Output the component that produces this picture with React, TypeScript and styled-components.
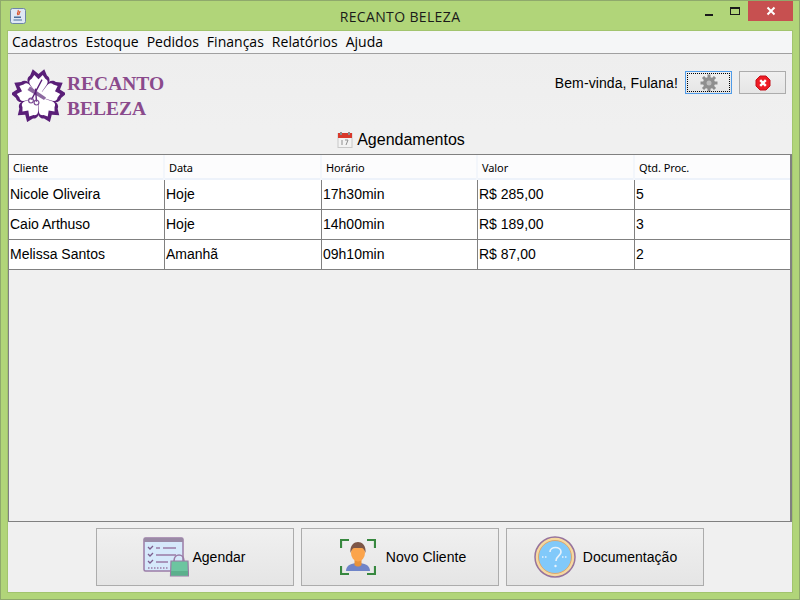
import React from "react";
import styled, { createGlobalStyle } from "styled-components";

const Global = createGlobalStyle`
  html, body { margin: 0; padding: 0; }
  body { font-family: "Liberation Sans", Arial, sans-serif; }
  * { box-sizing: border-box; }
`;

const Frame = styled.div`
  width: 800px; height: 600px; background: #b1d579; border: 1px solid #8fa96c;
  display: flex; flex-direction: column; overflow: hidden;
`;
const TitleBar = styled.div`
  height: 30px; display: flex; align-items: flex-start; position: relative; flex: none;
`;
const AppIcon = styled.div`
  width: 16px; height: 16px; margin: 7px 0 0 9px; flex: none;
`;
const TitleText = styled.div`
  position: absolute; left: 0; right: 0; top: 6px; text-align: center;
  font: 14px "Open Sans", sans-serif; line-height: 19px; color: #1a1a1a; letter-spacing: 0.36px;
`;
const WinControls = styled.div`
  margin-left: auto; margin-right: 6px; display: flex; align-items: flex-start;
`;
const WinBtn = styled.div<{ $w: number }>`
  width: ${p => p.$w}px; height: 20px; display: flex; align-items: center; justify-content: center;
`;
const CloseBtn = styled(WinBtn)`background: #c75050;`;
const Content = styled.div`
  flex: 1; margin: 0 7px 7px; background: #f0f0f0; display: flex; flex-direction: column;
  box-shadow: 0 0 0 1px #a2c46e; min-height: 0;
`;
const MenuBar = styled.div`
  height: 23px; flex: none; background: #f5f6f7; border-bottom: 1px solid #a0a0a0;
  display: flex; align-items: center; padding: 0 0 0 4px; gap: 8px;
`;
const MenuItem = styled.div`
  font: 14px "Open Sans", sans-serif; color: #000; line-height: 22px; letter-spacing: 0.02px;
`;
const Header = styled.div`
  height: 75px; flex: none; display: flex; align-items: flex-start; padding-left: 4px;
  background: linear-gradient(#eeeeee, #f0f0f0);
`;
const Logo = styled.div`display: flex; align-items: flex-start; margin-top: 15px; gap: 2px;`;
const LogoText = styled.div`
  font: bold 19.5px/25px "Liberation Serif", serif; color: #8a4a8c; margin-top: 2px;
`;
const UserArea = styled.div`
  margin-left: auto; margin-right: 6px; margin-top: 17px; display: flex; align-items: center;
`;
const Welcome = styled.div`font-size: 14px; color: #000; margin-right: 7px; letter-spacing: 0.1px;`;
const ToolBtn = styled.button<{ $focus?: boolean }>`
  width: 47px; height: 23px; padding: 0; margin: 0 0 0 ${p => p.$focus ? 0 : 7}px;
  display: flex; align-items: center; justify-content: center;
  background: linear-gradient(#f0f0f0, #e5e5e5);
  border: 1px solid ${p => p.$focus ? "#4f9be8" : "#acacac"};
  outline: ${p => p.$focus ? "1px dotted #000" : "none"}; outline-offset: -3px;
`;
const SectionTitle = styled.div`
  height: 25px; flex: none; display: flex; align-items: center; justify-content: center; gap: 4px;
  font-size: 16px; color: #000; padding-bottom: 3px; padding-left: 2px;
`;
const TableBox = styled.div`
  flex: 1; border: 1px solid #808080; border-right-width: 2px; min-height: 0;
  background: #f0f0f0; display: flex; flex-direction: column;
`;
const columns = "156px 157px 156px 157px 1fr";
const HeadRow = styled.div`
  display: grid; grid-template-columns: ${columns}; height: 25px; flex: none;
  background: #fcfcfd; border-bottom: 2px solid #edf2fa;
`;
const HeadCell = styled.div`
  font: 11px/25px "Noto Sans", sans-serif; color: #000; padding-left: 4px;
  border-right: 2px solid #f3f6fb; letter-spacing: -0.1px;
  &:last-child { border-right: none; }
`;
const Row = styled.div`
  display: grid; grid-template-columns: ${columns}; height: 30px; flex: none;
  background: #fff; border-bottom: 1px solid #808080;
`;
const Cell = styled.div`
  font-size: 14px; line-height: 29px; color: #000; padding-left: 1px;
  border-right: 1px solid #808080;
  &:last-child { border-right: none; }
`;
const Footer = styled.div`
  height: 70px; flex: none; display: flex; justify-content: center; align-items: center; gap: 7px;
`;
const ActionBtn = styled.button<{ $pl?: number; $pr?: number }>`
  width: 198px; height: 58px; border: 1px solid #acacac; margin: 0;
  padding: 0 ${p => p.$pr ?? 0}px 0 ${p => p.$pl ?? 0}px;
  background: linear-gradient(#f0f0f0, #e5e5e5);
  display: flex; align-items: center; justify-content: center;
  font: 14px "Liberation Sans", sans-serif; color: #000;
`;
const BtnLabel = styled.span<{ $ml: number }>`margin-left: ${p => p.$ml}px; letter-spacing: 0.02px;`;

const JavaIcon = () => (
  <svg width="16" height="16" viewBox="0 0 16 16">
    <rect x="0.5" y="0.5" width="15" height="15" rx="2" fill="#dfe8f5" stroke="#6d85a8" />
    <path d="M8 2c1.5 2-2 3 0 5M10 3c0 2-1.500 2-1 4" stroke="#d9532c" strokeWidth="1.2" fill="none" />
    <path d="M4 8.500h7v1.500H4zM3.500 11.500h8.500v1H3.500z" fill="#4a6f9c" />
  </svg>
);

const petalOuter = "M0 0L-7 -9.600C-11.500 -13-11.500 -18-8 -20L-5.500 -26L0 -21.500L5.500 -26L8 -20C11.500 -18 11.500 -13 7 -9.600Z";
const petalInner = "M0 0L-6.300 -9.200C-9.500 -13-9.500 -15.500-6.500 -17L-4 -20.500L0 -16.500L4 -20.500L6.500 -17C9.500 -15.500 9.500 -13 6.300 -9.200Z";
const angles = [0, 72, 144, 216, 288];
const FlowerLogo = () => (
  <svg width="53" height="53" viewBox="-26.500 -27.600 53 53">
    <g transform="scale(1.05)">
      {angles.map(a => <path key={a} d={petalOuter} transform={`rotate(${a})`} fill="#5a1f78" />)}
      {angles.map(a => <path key={a} d={petalInner} transform={`rotate(${a})`} fill="#fff" />)}
    </g>
    <circle r="6" fill="#fff" />
    <path d="M-11 -6.500L-8.500 -10L7.500 1L5.500 3.500Z" fill="#8d6aa0" />
    <path d="M3.500 -17L-7 3M-3 -8L-2 5" stroke="#5a1f78" strokeWidth="1.300" fill="none" />
    <circle cx="-7.500" cy="4" r="2.400" fill="none" stroke="#7d4d96" strokeWidth="1.200" />
    <circle cx="-2" cy="6" r="2.400" fill="none" stroke="#7d4d96" strokeWidth="1.200" />
  </svg>
);

const GearIcon = () => (
  <svg width="18" height="18" viewBox="0 0 18 18">
    <g fill="#8f8f8f">
      {[0, 45, 90, 135, 180, 225, 270, 315].map(a => (
        <rect key={a} x="7.500" y="0.500" width="3" height="4" transform={`rotate(${a} 9 9)`} />
      ))}
      <circle cx="9" cy="9" r="6" />
    </g>
    <circle cx="9" cy="9" r="2.500" fill="#bdbdbd" />
  </svg>
);

const StopIcon = () => (
  <svg width="16" height="16" viewBox="0 0 16 16">
    <path d="M5 1h6l4 4v6l-4 4H5l-4-4V5z" fill="#ee1c25" stroke="#c4101a" />
    <path d="M5.200 5.200L10.800 10.800M10.800 5.200L5.200 10.800" stroke="#fff" strokeWidth="2.400" />
  </svg>
);

const CalendarIcon = () => (
  <svg width="16" height="16" viewBox="0 0 16 16">
    <rect x="1" y="1.500" width="14" height="14" fill="#f3f3f3" stroke="#c8c8c8" />
    <rect x="1" y="1" width="14" height="5" fill="#d8392b" />
    <rect x="3" y="0" width="2" height="3" fill="#8b8b8b" />
    <rect x="11" y="0" width="2" height="3" fill="#8b8b8b" />
    <path d="M5 8v5M8 8h3l-2 5" stroke="#8f8f8f" strokeWidth="1" fill="none" />
  </svg>
);

const AgendarIcon = () => (
  <svg width="46" height="40" viewBox="0 0 46 40">
    <rect x="1" y="1" width="39" height="33" rx="1.500" fill="#d6e9fb" stroke="#9a7ba6" strokeWidth="1.500" />
    <rect x="1" y="1" width="39" height="4" fill="#9a8aa6" />
    <path d="M5 10l2 2 3-3M5 17l2 2 3-3M5 24l2 2 3-3" stroke="#7d5f8e" strokeWidth="1.300" fill="none" />
    <path d="M13 11h4M20 11h13M13 18h20M13 25h12" stroke="#9a7ba6" strokeWidth="1.500" />
    <path d="M5 31h21" stroke="#9a7ba6" strokeWidth="1.500" strokeDasharray="1.500 1.500" />
    <path d="M31 24c0-8 10-8 10 0" stroke="#9a7ba6" strokeWidth="1.600" fill="none" />
    <path d="M28 24h17l.500 15h-18z" fill="#6cc5a0" stroke="#9a7ba6" strokeWidth="1.200" />
    <path d="M28 34h17v4.500H28z" fill="#5cb08d" />
  </svg>
);

const ClienteIcon = () => (
  <svg width="36" height="36" viewBox="0 0 36 36">
    <path d="M1 9V1h8M27 1h8v8M35 27v8h-8M9 35H1v-8" stroke="#37883f" strokeWidth="2.200" fill="none" />
    <path d="M6 32c0-6 6-8 12-8s12 2 12 8z" fill="#6f84c8" />
    <path d="M14.500 20h7v6c-2 2-5 2-7 0z" fill="#e8923a" />
    <ellipse cx="18" cy="14" rx="7" ry="8.500" fill="#fba44c" />
    <path d="M10.500 14c-1-8 4-11 7.500-11s8.500 3 7.500 11c-1-3-2-5-4-5h-7c-2 0-3 2-4 5z" fill="#7d5647" />
  </svg>
);

const HelpIcon = () => (
  <svg width="42" height="42" viewBox="0 0 42 42">
    <circle cx="21" cy="21" r="20" fill="#f6d9a0" stroke="#96739d" strokeWidth="1.500" />
    <circle cx="21" cy="21" r="16.500" fill="#81c9fa" stroke="#e0a86c" strokeWidth="1" />
    <path d="M16 16c0-6 11-6 11 0 0 4-5 4-5 9" stroke="#e7f2fb" strokeWidth="1.700" fill="none" />
    <circle cx="21.500" cy="30" r="1.200" fill="#e7f2fb" />
    <path d="M8 21h6M28 21h6" stroke="#e7f2fb" strokeWidth="1.400" strokeDasharray="1.500 1.500" />
  </svg>
);

const heads = ["Cliente", "Data", "Horário", "Valor", "Qtd. Proc."];
const rows = [
  ["Nicole Oliveira", "Hoje", "17h30min", "R$ 285,00", "5"],
  ["Caio Arthuso", "Hoje", "14h00min", "R$ 189,00", "3"],
  ["Melissa Santos", "Amanhã", "09h10min", "R$ 87,00", "2"],
];
const menus = ["Cadastros", "Estoque", "Pedidos", "Finanças", "Relatórios", "Ajuda"];

export default function App() {
  return (
    <>
      <Global />
      <Frame>
        <TitleBar>
          <AppIcon><JavaIcon /></AppIcon>
          <TitleText>RECANTO BELEZA</TitleText>
          <WinControls>
            <WinBtn $w={27}>
              <svg width="10" height="10" viewBox="0 0 10 10"><rect x="1" y="8" width="8" height="2" fill="#1a1a1a" /></svg>
            </WinBtn>
            <WinBtn $w={26}>
              <svg width="10" height="10" viewBox="0 0 10 10"><rect x="0.500" y="1.500" width="9" height="7" fill="none" stroke="#1a1a1a" /><rect x="0" y="1" width="10" height="2" fill="#1a1a1a" /></svg>
            </WinBtn>
            <CloseBtn $w={45}>
              <svg width="10" height="10" viewBox="0 0 10 10"><path d="M1.500 1.500L8.500 8.500M8.500 1.500L1.500 8.500" stroke="#fff" strokeWidth="2" /></svg>
            </CloseBtn>
          </WinControls>
        </TitleBar>
        <Content>
          <MenuBar>{menus.map(m => <MenuItem key={m}>{m}</MenuItem>)}</MenuBar>
          <Header>
            <Logo>
              <FlowerLogo />
              <LogoText>RECANTO<br />BELEZA</LogoText>
            </Logo>
            <UserArea>
              <Welcome>Bem-vinda, Fulana!</Welcome>
              <ToolBtn $focus><GearIcon /></ToolBtn>
              <ToolBtn><StopIcon /></ToolBtn>
            </UserArea>
          </Header>
          <SectionTitle><CalendarIcon />Agendamentos</SectionTitle>
          <TableBox>
            <HeadRow>{heads.map(h => <HeadCell key={h}>{h}</HeadCell>)}</HeadRow>
            {rows.map(r => <Row key={r[0]}>{r.map((c, i) => <Cell key={i}>{c}</Cell>)}</Row>)}
          </TableBox>
          <Footer>
            <ActionBtn $pr={1}><AgendarIcon /><BtnLabel $ml={3}>Agendar</BtnLabel></ActionBtn>
            <ActionBtn $pl={6}><ClienteIcon /><BtnLabel $ml={10}>Novo Cliente</BtnLabel></ActionBtn>
            <ActionBtn $pl={1}><HelpIcon /><BtnLabel $ml={7}>Documentação</BtnLabel></ActionBtn>
          </Footer>
        </Content>
      </Frame>
    </>
  );
}
